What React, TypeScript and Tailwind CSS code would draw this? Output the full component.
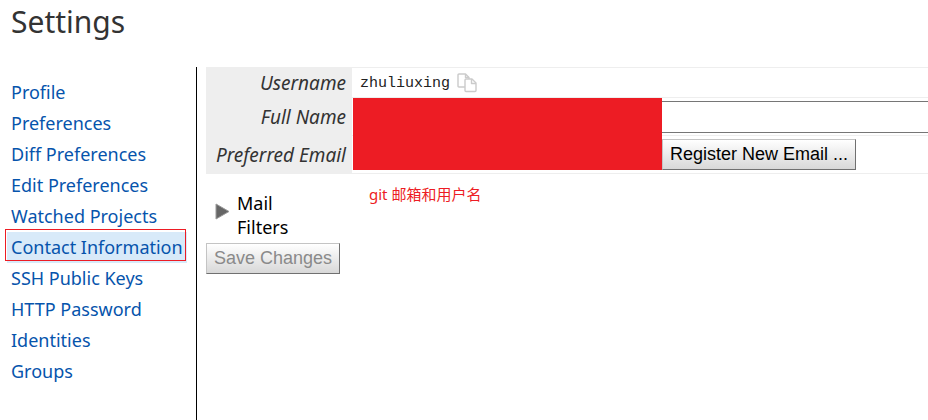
import { useState } from "react";

const MENU = [
  "Profile",
  "Preferences",
  "Diff Preferences",
  "Edit Preferences",
  "Watched Projects",
  "Contact Information",
  "SSH Public Keys",
  "HTTP Password",
  "Identities",
  "Groups",
];

const buttonStyle =
  "h-[31px] shrink-0 whitespace-nowrap border border-t-[#c4c4c4] border-l-[#c4c4c4] border-r-[#707070] border-b-[#707070] bg-linear-to-b from-white to-[#d8d8d8] px-[7px] pb-[2px] font-['Liberation_Sans',Arial,sans-serif] text-[18px] leading-7";

const labelStyle =
  "w-[146px] shrink-0 bg-[#eee] pr-[6px] text-right text-[19px] font-normal italic text-[#333]";

function CopyIcon() {
  return (
    <svg width="20" height="20" viewBox="0 0 20 20" fill="#fff" stroke="#cbcbcb" strokeWidth="1.4" strokeLinejoin="round" aria-hidden="true">
      <path d="M2 1h6.500l3.500 3.500V14H2q-1 0-1-1V2q0-1 1-1z" />
      <path d="M8.500 1v3.500H12" fill="none" />
      <path d="M9 6h6l4 4v7.500q0 1-1 1H9q-1 0-1-1V7q0-1 1-1z" />
      <path d="M14.500 6v4.500H19" fill="none" />
    </svg>
  );
}

function Sidebar() {
  return (
    <nav className="w-[197px] shrink-0 border-r border-black pt-[10px] pl-[7px]">
      <ul>
        {MENU.map((item) => {
          const selected = item === "Contact Information";
          return (
            <li key={item} className={selected ? "relative mr-[9px] bg-[#d8eaf9]" : "mr-[9px]"}>
              <a
                href="#"
                aria-current={selected ? "page" : undefined}
                className="block h-[31px] whitespace-nowrap pl-1 leading-[31px] text-[#0654ac]"
              >
                {item}
              </a>
              {selected && (
                <span className="pointer-events-none absolute -top-[3px] -left-[2px] h-[32px] w-[181px] border border-[#ed1c24]" />
              )}
            </li>
          );
        })}
      </ul>
    </nav>
  );
}

function ContactForm() {
  const [fullName, setFullName] = useState("");
  return (
    <form className="min-w-0 grow pl-[9px]" onSubmit={(e) => e.preventDefault()}>
      <div className="relative border-b border-[#eee]">
        <div className="flex h-[30px] border-t border-[#eee]">
          <span className={`${labelStyle} leading-[30px]`}>Username</span>
          <div className="flex items-center pl-[8px] font-['Liberation_Mono',monospace] text-[15px] text-[#222]">
            <span className="pt-1">zhuliuxing</span>
            <button type="button" aria-label="Copy to clipboard" className="ml-[7px]">
              <CopyIcon />
            </button>
          </div>
        </div>
        <div className="flex h-[38px]">
          <label htmlFor="full-name" className={`${labelStyle} leading-[40px]`}>
            Full Name
          </label>
          <div className="grow overflow-hidden border-t border-[#eee] pt-[3px] pl-[5px]">
            <input
              id="full-name"
              value={fullName}
              onChange={(e) => setFullName(e.target.value)}
              className="h-[32px] w-[110%] border border-[#767676] px-1"
            />
          </div>
        </div>
        <div className="flex h-[38px]">
          <label htmlFor="email" className={`${labelStyle} leading-[40px]`}>
            Preferred Email
          </label>
          <div className="flex grow border-t border-[#eee] pt-[3px] pl-[5px]">
            <select id="email" className="h-[31px] w-[305px] border border-[#767676]" />
            <button type="button" className={`${buttonStyle} text-black`}>
              Register New Email ...
            </button>
          </div>
        </div>
        <div className="absolute top-[31px] left-[147px] h-[72px] w-[309px] bg-[#ed1c24]" />
      </div>
      <div className="flex items-start pt-[8px]">
        <button type="button" className="flex w-[163px] items-start pt-[9px] pl-[9px] text-left leading-6 text-black">
          <svg width="15" height="17" viewBox="0 0 15 17" className="mt-[12px] mr-[7px] shrink-0" aria-hidden="true">
            <path d="M1 1l13 7.500L1 16z" fill="#666" stroke="#999" />
          </svg>
          <span className="w-[60px]">Mail Filters</span>
        </button>
        <p className="font-['Noto_Sans','Noto_Sans_CJK_SC',sans-serif] text-[15px] leading-6 text-[#ed1c24]" lang="zh-CN">
          git 邮箱和用户名
        </p>
      </div>
      <button type="button" disabled className={`${buttonStyle} mt-[4px] text-[#8a8a8a]`}>
        Save Changes
      </button>
    </form>
  );
}

export default function App() {
  return (
    <div className="flex min-h-screen flex-col overflow-x-hidden bg-white font-['Noto_Sans','Noto_Sans_CJK_SC',sans-serif] text-[18px]">
      <h1 className="h-[67px] pt-[2px] pl-[11px] text-[30px] leading-10 text-[#333]">Settings</h1>
      <main className="flex grow">
        <Sidebar />
        <ContactForm />
      </main>
    </div>
  );
}
